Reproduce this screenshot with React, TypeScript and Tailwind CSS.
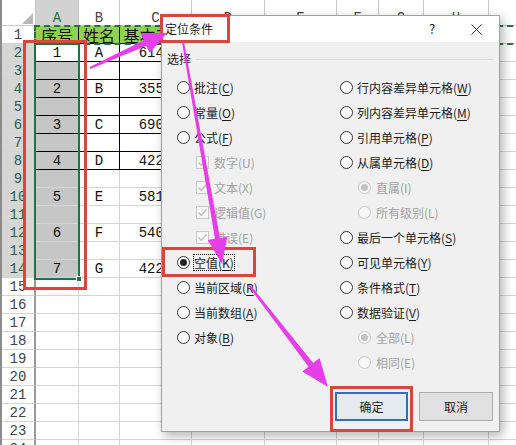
import React from 'react';

const letters = ['', 'A', 'B', 'C', 'D', 'E', 'F', 'G', 'H', 'I'];
const names = ['A', 'B', 'C', 'D', 'E', 'F', 'G'];
const pay = ['6140', '3550', '6900', '4220', '5810', '5400', '4220'];

const cjk = "font-['Noto_Sans_CJK_SC',sans-serif]";
const mono = "font-['Liberation_Mono','Noto_Sans_CJK_SC',monospace]";

function cellText(r: number, c: number): string {
  if (r === 1) return ['', '序号', '姓名', '基本工资'][c] ?? '';
  if (r % 2 === 0 && r <= 14) {
    const i = r / 2 - 1;
    if (c === 1) return String(i + 1);
    if (c === 2) return names[i];
    if (c === 3) return pay[i];
  }
  return '';
}

// tapered arrow polygon from tail to tip
function arrow(x1: number, y1: number, x2: number, y2: number, tail = 1, shaft = 3, headLen = 24, headW = 10) {
  const L = Math.hypot(x2 - x1, y2 - y1);
  const ux = (x2 - x1) / L;
  const uy = (y2 - y1) / L;
  const nx = -uy;
  const ny = ux;
  const bx = x2 - ux * headLen;
  const by = y2 - uy * headLen;
  const pts = [
    [x1 + nx * tail, y1 + ny * tail],
    [bx + nx * shaft, by + ny * shaft],
    [bx + nx * headW, by + ny * headW],
    [x2, y2],
    [bx - nx * headW, by - ny * headW],
    [bx - nx * shaft, by - ny * shaft],
    [x1 - nx * tail, y1 - ny * tail],
  ];
  return pts.map((p) => p.map((v) => v.toFixed(1)).join(',')).join(' ');
}

const Sheet = () => {
  const rows = Array.from({ length: 25 }, (_, i) => i);
  const cols = Array.from({ length: 10 }, (_, i) => i);

  return (
    <div className="grid grid-cols-[34px_43px_41px_72px_73px_72px_42px_45px_65px_80px] grid-rows-[26px_repeat(24,18px)] border-l-2 border-[#8c8c8c]">
      {rows.map((r) =>
        cols.map((c) => {
          if (r === 0) {
            if (c === 0) {
              return (
                <div key={`${r}-${c}`} className="relative bg-white border-r border-b border-[#c8c8c8]">
                  <svg className="absolute right-[2px] bottom-[1px]" width="11" height="11">
                    <polygon points="11,0 11,11 0,11" fill="#b8b8b8" />
                  </svg>
                </div>
              );
            }
            return (
              <div
                key={`${r}-${c}`}
                className={`flex items-start justify-center pt-[11px] leading-[14px] overflow-hidden border-r border-b border-[#c8c8c8] text-[14px] ${mono} ${
                  c === 1 ? 'bg-[#d2d2d2] text-[#217346]' : 'bg-white text-[#444]'
                }`}
              >
                {letters[c]}
              </div>
            );
          }
          if (c === 0) {
            const sel = r >= 2 && r <= 14;
            return (
              <div
                key={`${r}-${c}`}
                className={`flex items-center justify-center pt-[2px] border-b border-[#d4d4d4] border-r-2 border-r-[#9a9a9a] text-[14px] ${mono} ${
                  sel ? 'bg-[#d6d6d6] text-[#2e5e43]' : 'bg-white text-[#444]'
                }`}
              >
                {r}
              </div>
            );
          }
          const inTable = r <= 8 && c <= 3;
          const green = r === 1 && c <= 3;
          const grey = c === 1 && r >= 3 && r <= 14;
          return (
            <div
              key={`${r}-${c}`}
              className={`flex items-center justify-center overflow-hidden whitespace-nowrap border-r border-b text-[#111] ${
                inTable ? 'border-black' : 'border-[#d4d4d4]'
              } ${green ? 'bg-[#92d050]' : grey ? 'bg-[#c6c6c6]' : 'bg-white'} ${
                r === 1 ? `text-[16px] leading-[18px] ${cjk}` : `text-[14px] pt-[2px] ${mono}`
              }`}
            >
              {cellText(r, c)}
            </div>
          );
        })
      )}
    </div>
  );
};

type Item = { label: string; k: string; kind: 'radio' | 'check' | 'sub'; checked?: boolean; focus?: boolean };

const leftItems: Item[] = [
  { label: '批注', k: 'C', kind: 'radio' },
  { label: '常量', k: 'O', kind: 'radio' },
  { label: '公式', k: 'F', kind: 'radio' },
  { label: '数字', k: 'U', kind: 'check', checked: true },
  { label: '文本', k: 'X', kind: 'check', checked: true },
  { label: '逻辑值', k: 'G', kind: 'check', checked: true },
  { label: '错误', k: 'E', kind: 'check', checked: true },
  { label: '空值', k: 'K', kind: 'radio', checked: true, focus: true },
  { label: '当前区域', k: 'R', kind: 'radio' },
  { label: '当前数组', k: 'A', kind: 'radio' },
  { label: '对象', k: 'B', kind: 'radio' },
];

const rightItems: Item[] = [
  { label: '行内容差异单元格', k: 'W', kind: 'radio' },
  { label: '列内容差异单元格', k: 'M', kind: 'radio' },
  { label: '引用单元格', k: 'P', kind: 'radio' },
  { label: '从属单元格', k: 'D', kind: 'radio' },
  { label: '直属', k: 'I', kind: 'sub', checked: true },
  { label: '所有级别', k: 'L', kind: 'sub' },
  { label: '最后一个单元格', k: 'S', kind: 'radio' },
  { label: '可见单元格', k: 'Y', kind: 'radio' },
  { label: '条件格式', k: 'T', kind: 'radio' },
  { label: '数据验证', k: 'V', kind: 'radio' },
  { label: '全部', k: 'L', kind: 'sub', checked: true },
  { label: '相同', k: 'E', kind: 'sub' },
];

const Option = ({ item, subIndent }: { item: Item; subIndent: string }) => {
  const disabled = item.kind !== 'radio';
  return (
    <div className={`h-[25px] flex items-center ${disabled ? `${subIndent} gap-[5px] text-[#a2a2a2]` : 'gap-[4px]'}`}>
      {item.kind === 'check' ? (
        <span className="w-[13px] h-[13px] border border-[#c8c8c8] bg-[#f7f7f7] flex items-center justify-center">
          <svg width="11" height="11" viewBox="0 0 11 11">
            <path d="M1.5 5.5 L4.2 8.2 L9.5 2.5" fill="none" stroke="#bdbdbd" strokeWidth="1.4" />
          </svg>
        </span>
      ) : (
        <span
          className={`w-[13px] h-[13px] rounded-full border flex items-center justify-center ${
            disabled ? 'border-[#c8c8c8] bg-[#f7f7f7]' : 'border-[#333] bg-white'
          }`}
        >
          {item.checked && (
            <span className={`w-[7px] h-[7px] rounded-full ${disabled ? 'bg-[#c2c2c2]' : 'bg-[#222]'}`} />
          )}
        </span>
      )}
      <span className={`leading-[15px] whitespace-nowrap ${item.focus ? 'outline outline-1 outline-dotted outline-black' : ''}`}>
        {item.label}(
        {disabled ? item.k : <span className="underline underline-offset-2">{item.k}</span>})
      </span>
    </div>
  );
};

const Dialog = () => (
  <div
    className={`absolute left-[161px] top-[15px] w-[339px] h-[417px] flex flex-col bg-[#f0f0f0] border border-[#a0a0a0] shadow-[3px_4px_10px_rgba(0,0,0,0.3)] text-[12px] text-[#1b1b1b] ${cjk}`}
  >
    <div className="h-[26px] shrink-0 bg-white flex items-center pl-[3px]">
      <span>定位条件</span>
      <span className="ml-auto mr-[6px] w-[30px] text-center text-[13px]">?</span>
      <span className="w-[46px] flex items-center justify-center">
        <svg width="11" height="11" viewBox="0 0 11 11">
          <path d="M0.5 0.5 L10.5 10.5 M10.5 0.5 L0.5 10.5" stroke="#333" strokeWidth="1" />
        </svg>
      </span>
    </div>
    <div className="pt-[9px] pl-[5px] pr-[6px] h-[25px] flex items-center gap-[5px]">
      <span>选择</span>
      <span className="flex-1 h-px bg-[#dcdcdc]" />
    </div>
    <div className="grid grid-cols-[163px_1fr] pl-[15px] mt-[8px]">
      <div className="flex flex-col">
        {leftItems.map((it) => (
          <Option key={it.label} item={it} subIndent="pl-[19px]" />
        ))}
      </div>
      <div className="flex flex-col">
        {rightItems.map((it) => (
          <Option key={it.label} item={it} subIndent="pl-[18px]" />
        ))}
      </div>
    </div>
    <div className="mt-auto mb-[10px] flex justify-end gap-[11px] pr-[6px]">
      <button className="w-[73px] h-[29px] bg-[#e5eaf0] border-2 border-[#2a72c0] text-[12px]">确定</button>
      <button className="w-[74px] h-[29px] bg-[#e1e1e1] border border-[#adadad] text-[12px]">取消</button>
    </div>
  </div>
);

export default function App() {
  const red = 'absolute border-[3px] border-[#d9463e]';
  return (
    <div className="relative w-[516px] h-[445px] overflow-hidden bg-white">
      <Sheet />
      {/* copy marquee on row 1 */}
      <div className="absolute left-[34px] top-[25px] w-[600px] h-[20px] border-2 border-dashed border-[#217346]" />
      {/* selection A2:A14 */}
      <div className="absolute left-[34px] top-[43px] w-[46px] h-[237px] border-2 border-[#217346]">
        <span className="absolute -right-[4px] -bottom-[4px] w-[6px] h-[6px] bg-[#217346] border border-white" />
      </div>
      <Dialog />
      {/* annotations */}
      <div className={`${red} left-[23px] top-[40px] w-[64px] h-[250px]`} />
      <div className={`${red} left-[160px] top-[14px] w-[70px] h-[29px]`} />
      <div className={`${red} left-[162px] top-[247px] w-[94px] h-[30px]`} />
      <div className={`${red} left-[330px] top-[386px] w-[83px] h-[46px]`} />
      <svg className="absolute inset-0 pointer-events-none" width="516" height="445">
        <polygon points={arrow(90, 68, 167, 33, 1, 3, 24, 11)} fill="#e63fe8" />
        <polygon points={arrow(183, 42, 222, 264, 1, 2.5, 26, 10)} fill="#e63fe8" />
        <polygon points={arrow(249, 285, 328, 387, 1, 3, 28, 11)} fill="#e63fe8" />
      </svg>
    </div>
  );
}
